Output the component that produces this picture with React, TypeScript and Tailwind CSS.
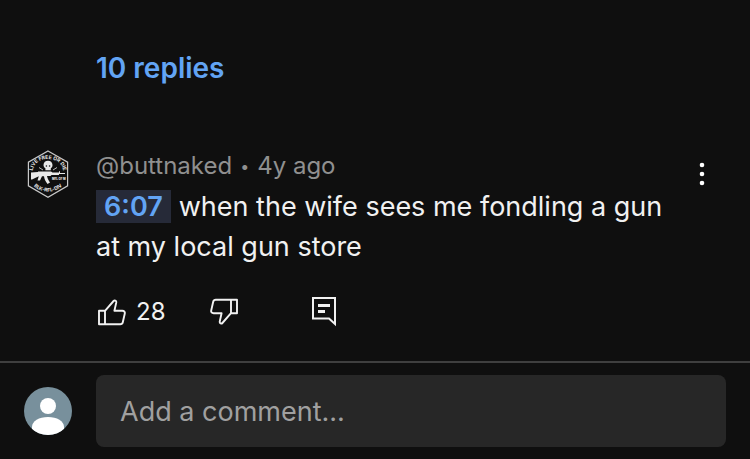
import type { ReactNode } from "react";

type Comment = {
  author: string;
  age: string;
  timestamp: string;
  text: string;
  likes: number;
};

const comment: Comment = {
  author: "@buttnaked",
  age: "4y ago",
  timestamp: "6:07",
  text: "when the wife sees me fondling a gun at my local gun store",
  likes: 28,
};

export default function App() {
  return (
    <div className="flex min-h-screen flex-col bg-[#0f0f0f] font-['Inter',sans-serif] text-[#f1f1f1]">
      <main className="flex-1 px-6 pt-12">
        <button type="button" className="ml-[72px] block text-[28px] leading-10 font-semibold text-[#62a4f4]">
          10 replies
        </button>
        <CommentItem comment={comment} />
      </main>
      <CommentForm />
    </div>
  );
}

function CommentItem({ comment }: { comment: Comment }) {
  return (
    <article className="mt-[62px] flex items-start pb-6">
      <HexBadge />
      <div className="ml-6 min-w-0 flex-1">
        <p className="flex items-center text-2xl leading-8 text-[#909090]">
          <span>{comment.author}</span>
          <span className="mx-2 text-base leading-8">•</span>
          <span>{comment.age}</span>
        </p>
        <p className="mt-[5px] text-[27px] leading-10">
          <a href="#t=367" className="mr-2 bg-[#262a38] px-2 font-semibold text-[#62a4f4]">
            {comment.timestamp}
          </a>
          {comment.text}
        </p>
        <div className="mt-[29px] flex items-center">
          <ActionButton label="Like">
            <ThumbIcon />
            <span className="text-2xl leading-8">{comment.likes}</span>
          </ActionButton>
          <div className="ml-[43px] flex">
            <ActionButton label="Dislike">
              <ThumbIcon className="rotate-180" />
            </ActionButton>
          </div>
          <div className="ml-[70px] flex">
            <ActionButton label="Reply">
              <ReplyIcon />
            </ActionButton>
          </div>
        </div>
      </div>
      <button type="button" aria-label="More options" className="flex size-12 shrink-0 items-center justify-center">
        <svg viewBox="0 0 6 24" className="h-6 w-[6px]" fill="#fff">
          <circle cx="3" cy="3" r="2.3" />
          <circle cx="3" cy="12" r="2.3" />
          <circle cx="3" cy="21" r="2.3" />
        </svg>
      </button>
    </article>
  );
}

function ActionButton({ label, children }: { label: string; children: ReactNode }) {
  return (
    <button type="button" aria-label={label} className="flex h-8 items-center gap-2">
      {children}
    </button>
  );
}

function CommentForm() {
  return (
    <form className="flex items-center gap-6 border-t-2 border-[#3f3f3f] px-6 py-3">
      <svg viewBox="0 0 48 48" className="size-12 shrink-0">
        <defs>
          <clipPath id="avatar">
            <circle cx="24" cy="24" r="24" />
          </clipPath>
        </defs>
        <g clipPath="url(#avatar)">
          <rect width="48" height="48" fill="#78909c" />
          <circle cx="24" cy="19" r="8" fill="#fff" />
          <path d="M8 48V40C8 34 15 30 24 30S40 34 40 40V48Z" fill="#fff" />
        </g>
      </svg>
      <input
        type="text"
        aria-label="Add a comment"
        placeholder="Add a comment..."
        className="h-[72px] min-w-0 flex-1 rounded-lg bg-[#272727] px-6 text-[27px] outline-none placeholder:text-[#a0a0a0]"
      />
    </form>
  );
}

function HexBadge() {
  return (
    <svg viewBox="0 0 48 48" className="size-12 shrink-0" fill="#e8e8e8">
      <path d="M24 1 43.6 12.2V35.8L24 47.2 4.4 35.8V12.2Z" fill="none" stroke="#c8c8c8" strokeWidth="1.2" />
      <defs>
        <path id="badge-top" d="M8.6 21C10 12.5 17 9 24 9S38 12.5 39.4 21" />
        <path id="badge-bottom" d="M7.5 33C14 44.5 34 44.5 40.5 33" />
      </defs>
      <g fontSize="5" fontWeight="700" textAnchor="middle">
        <text>
          <textPath href="#badge-top" startOffset="50%">LIVE FREE OR DIE</textPath>
        </text>
        <text>
          <textPath href="#badge-bottom" startOffset="50%">BLK-RFL-DIV</textPath>
        </text>
      </g>
      {/* skull */}
      <path d="M19.5 15C19.5 12.3 21.6 10.8 24 10.8S28.5 12.3 28.5 15C28.5 17 27.6 17.8 26.8 18.2V20.2H21.4V18.2C20.3 17.6 19.5 16.6 19.5 15Z" />
      <circle cx="22.4" cy="16" r="0.8" fill="#111" />
      <circle cx="25.6" cy="16" r="0.8" fill="#111" />
      <path d="M15 17.5 19 20M33 17.5 29 20" stroke="#ccc" strokeWidth="0.9" />
      {/* rifle */}
      <path d="M7 22.5 14 22V21.5H27L28.5 22.5H35V21.3H36V23H41V24H35V25H27.5L26.5 26H23C23.5 29 25 31 26 32.5L23.5 34C21.5 31.5 20.3 29 20 26.3H18L16 30.5H13.5L14.8 26.3 8 29.5H7Z" />
      <text x="28" y="29.5" fontSize="2.8" fontWeight="800">MFL OF M</text>
    </svg>
  );
}

function ThumbIcon({ className = "" }: { className?: string }) {
  return (
    <svg
      viewBox="0 0 32 32"
      className={`size-8 ${className}`}
      fill="none"
      stroke="#f1f1f1"
      strokeWidth="1.9"
      strokeLinejoin="round"
    >
      <path d="M3 14.8H9V28.2H3ZM9 14.8 17.6 5C18.4 4.1 20.6 4.4 20.3 6.4L18.4 14.8H26.4C28.2 14.8 29.2 16 28.8 17.6L26.8 26.2C26.5 27.5 25.5 28.2 24.2 28.2H9" />
    </svg>
  );
}

function ReplyIcon() {
  return (
    <svg viewBox="0 0 28 32" className="h-8 w-7" fill="none" stroke="#f1f1f1" strokeWidth="2">
      <path d="M3 2H25V28L19 22.5H3Z" />
      <path d="M8 9.5H20M8 15.5H15" strokeWidth="3" />
    </svg>
  );
}
